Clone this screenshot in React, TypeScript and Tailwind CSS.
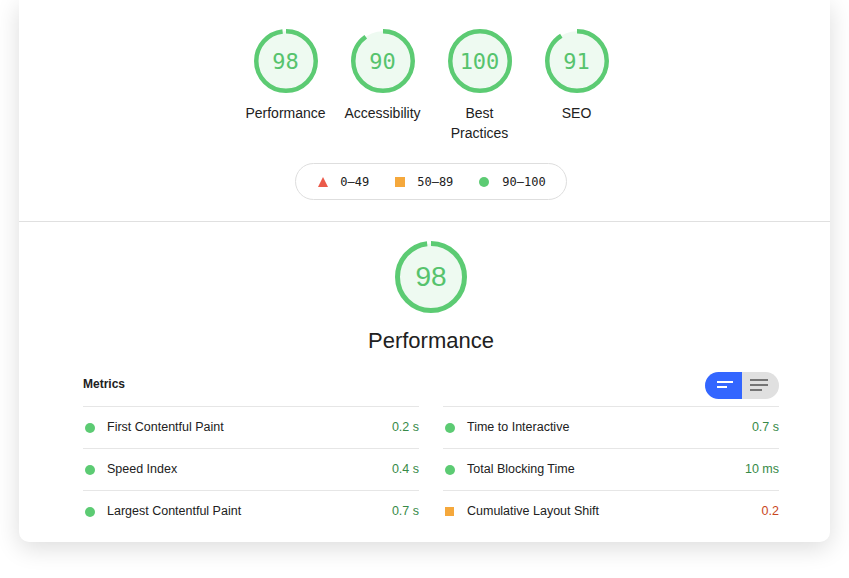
import React from 'react';

const GREEN = '#5ccb73';

interface GaugeProps {
  score: number;
  size: number;
  big?: boolean;
}

const Gauge: React.FC<GaugeProps> = ({ score, size, big }) => {
  const stroke = big ? 5 : 4.5;
  const r = (size - stroke) / 2;
  const c = 2 * Math.PI * r;
  const arc = (score / 100) * c;
  return (
    <div className="relative" style={{ width: size, height: size }}>
      <svg width={size} height={size} className="-rotate-90">
        <circle cx={size / 2} cy={size / 2} r={r} fill="#eefaf1" />
        <circle
          cx={size / 2}
          cy={size / 2}
          r={r}
          fill="none"
          stroke={GREEN}
          strokeWidth={stroke}
          strokeDasharray={`${arc} ${c}`}
        />
      </svg>
      <div
        className={
          big
            ? "absolute inset-0 flex items-center justify-center text-[28px] text-[#56c36d] font-['Liberation_Sans',Arial,sans-serif]"
            : "absolute inset-0 flex items-center justify-center text-[22px] text-[#56c36d] font-['DejaVu_Sans_Mono',monospace]"
        }
      >
        {score}
      </div>
    </div>
  );
};

const categories = [
  { score: 98, label: 'Performance' },
  { score: 90, label: 'Accessibility' },
  { score: 100, label: 'Best Practices' },
  { score: 91, label: 'SEO' }
];

type Status = 'pass' | 'average';

const metrics: { label: string; value: string; status: Status }[][] = [
  [
    { label: 'First Contentful Paint', value: '0.2 s', status: 'pass' },
    { label: 'Speed Index', value: '0.4 s', status: 'pass' },
    { label: 'Largest Contentful Paint', value: '0.7 s', status: 'pass' }
  ],
  [
    { label: 'Time to Interactive', value: '0.7 s', status: 'pass' },
    { label: 'Total Blocking Time', value: '10 ms', status: 'pass' },
    { label: 'Cumulative Layout Shift', value: '0.2', status: 'average' }
  ]
];

const MetricRow: React.FC<{ label: string; value: string; status: Status }> = ({ label, value, status }) => (
  <div className="flex h-[42px] items-center border-t border-[#e6e6e6]">
    {status === 'pass' ? (
      <span className="ml-[2px] h-[10px] w-[10px] rounded-full bg-[#5ccb73]" />
    ) : (
      <span className="ml-[2px] h-[9px] w-[9px] bg-[#f5a83c]" />
    )}
    <span className={status === 'pass' ? 'ml-3 flex-1 text-[#212121]' : 'ml-[13px] flex-1 text-[#212121]'}>{label}</span>
    <span className={status === 'pass' ? 'text-[#378a48]' : 'text-[#c9461c]'}>{value}</span>
  </div>
);

export default function App() {
  return (
    <div className="min-h-screen bg-white px-[19px] pb-9 font-['Liberation_Sans',Arial,sans-serif]">
      <div className="rounded-b-[10px] bg-white shadow-[0_6px_24px_rgba(0,0,0,0.14)]">
        {/* category gauges */}
        <div className="pl-16 pr-[51px] pt-[29px] pb-[21px]">
          <div className="flex justify-center">
            {categories.map(cat => (
              <div key={cat.label} className="flex w-[97px] flex-col items-center">
                <Gauge score={cat.score} size={64} />
                <div className="mt-[10px] max-w-[84px] text-center text-[14px] leading-5 text-[#212121]">
                  {cat.label}
                </div>
              </div>
            ))}
          </div>
          <div className="mt-5 flex justify-center">
            <div className="flex h-[37px] items-center gap-[26px] rounded-full border border-[#dedede] pl-[22px] pr-[20px] font-['DejaVu_Sans_Mono',monospace] text-[12px] text-[#212121]">
              <div className="flex items-center gap-3">
                <svg width="10" height="10" viewBox="0 0 10 10">
                  <polygon points="5,0 10,10 0,10" fill="#eb5a4a" />
                </svg>
                <span>0–49</span>
              </div>
              <div className="flex items-center gap-3">
                <span className="h-[10px] w-[10px] bg-[#f5a83c]" />
                <span>50–89</span>
              </div>
              <div className="flex items-center gap-[13px]">
                <span className="h-[10px] w-[10px] rounded-full bg-[#5ccb73]" />
                <span>90–100</span>
              </div>
            </div>
          </div>
        </div>

        {/* performance section */}
        <div className="border-t border-[#e0e0e0] pl-16 pr-[51px] pt-[19px] pb-[10px]">
          <div className="flex flex-col items-center">
            <Gauge score={98} size={72} big />
            <div className="mt-[14px] text-[22px] leading-7 text-[#212121]">Performance</div>
          </div>

          <div className="mt-[17px] flex h-[27px] items-center justify-between">
            <div className="mb-[4px] text-[12px] font-bold text-[#212121]">Metrics</div>
            <div className="flex h-[27px] w-[74px] overflow-hidden rounded-full">
              <div className="flex w-[37px] items-center bg-[#3366ff]">
                <svg width="37" height="27">
                  <rect x="12" y="9" width="16" height="2" fill="#fff" />
                  <rect x="12" y="14" width="10" height="2" fill="#fff" />
                </svg>
              </div>
              <div className="flex w-[37px] items-center bg-[#e0e0e0]">
                <svg width="37" height="27">
                  <rect x="8" y="7" width="18" height="2" fill="#757575" />
                  <rect x="8" y="12" width="18" height="2" fill="#757575" />
                  <rect x="8" y="17" width="12" height="2" fill="#757575" />
                </svg>
              </div>
            </div>
          </div>

          <div className="mt-[7px] grid grid-cols-2 gap-x-6 text-[12.5px]">
            {metrics.map((col, i) => (
              <div key={i}>
                {col.map(m => (
                  <MetricRow key={m.label} {...m} />
                ))}
              </div>
            ))}
          </div>
        </div>
      </div>
    </div>
  );
}
